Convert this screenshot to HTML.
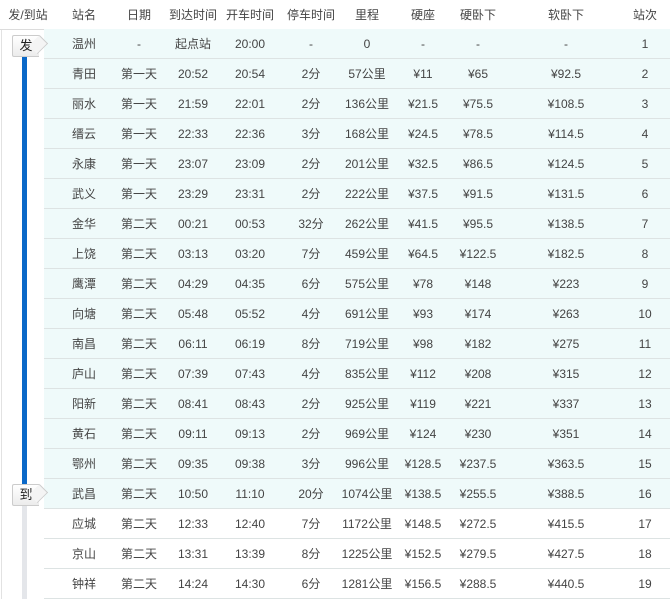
<!DOCTYPE html>
<html><head><meta charset="utf-8"><style>
body{margin:0;width:670px;height:599px;background:#fff;overflow:hidden;font-family:"Liberation Sans","Noto Sans CJK SC","WenQuanYi Zen Hei",sans-serif;font-size:12px;color:#444;position:relative}
.hdr{position:absolute;left:0;top:0;width:670px;height:29px;border-bottom:1px solid #dcdcdc}
.c{position:absolute;text-align:center;white-space:nowrap;line-height:16px;height:16px}
.row{position:absolute;left:44px;width:626px;height:29px;border-bottom:1px solid #dde3e3}
.cy{background:#effafa}
.vl{position:absolute;left:1px;top:30px;width:1px;height:569px;background:#e2e2e2}
.bar{position:absolute;left:22px;width:5px}
.tag{position:absolute;left:12px;width:26px;height:20px;background:linear-gradient(#fff,#ececec);border:1px solid #ccc;border-right:none;border-radius:2px 0 0 2px;font-size:13px;color:#222;line-height:20px;text-align:center}
.tag:after{content:"";position:absolute;right:-7px;top:1px;width:14px;height:14px;background:#f4f4f4;border-right:1px solid #ccc;border-top:1px solid #ccc;transform:rotate(45deg) scale(.8,1);transform-origin:center}
</style></head><body>
<div class="hdr"></div>
<div class="vl"></div>
<div id="t"></div>
<div class="bar" style="top:55px;height:432px;background:#0a68c8"></div>
<div class="bar" style="top:487px;height:112px;background:#e4e6ea"></div>
<div class="tag" style="top:35px">发</div>
<div class="tag" style="top:484px">到</div>
<script>
(function(){
var cx=[28,84,139,193,250,311,367,423,478,566,645];
var h=["发/到站","站名","日期","到达时间","开车时间","停车时间","里程","硬座","硬卧下","软卧下","站次"];
var d=[
["温州","-","起点站","20:00","-","0","-","-","-"],
["青田","第一天","20:52","20:54","2分","57公里","¥11","¥65","¥92.5"],
["丽水","第一天","21:59","22:01","2分","136公里","¥21.5","¥75.5","¥108.5"],
["缙云","第一天","22:33","22:36","3分","168公里","¥24.5","¥78.5","¥114.5"],
["永康","第一天","23:07","23:09","2分","201公里","¥32.5","¥86.5","¥124.5"],
["武义","第一天","23:29","23:31","2分","222公里","¥37.5","¥91.5","¥131.5"],
["金华","第二天","00:21","00:53","32分","262公里","¥41.5","¥95.5","¥138.5"],
["上饶","第二天","03:13","03:20","7分","459公里","¥64.5","¥122.5","¥182.5"],
["鹰潭","第二天","04:29","04:35","6分","575公里","¥78","¥148","¥223"],
["向塘","第二天","05:48","05:52","4分","691公里","¥93","¥174","¥263"],
["南昌","第二天","06:11","06:19","8分","719公里","¥98","¥182","¥275"],
["庐山","第二天","07:39","07:43","4分","835公里","¥112","¥208","¥315"],
["阳新","第二天","08:41","08:43","2分","925公里","¥119","¥221","¥337"],
["黄石","第二天","09:11","09:13","2分","969公里","¥124","¥230","¥351"],
["鄂州","第二天","09:35","09:38","3分","996公里","¥128.5","¥237.5","¥363.5"],
["武昌","第二天","10:50","11:10","20分","1074公里","¥138.5","¥255.5","¥388.5"],
["应城","第二天","12:33","12:40","7分","1172公里","¥148.5","¥272.5","¥415.5"],
["京山","第二天","13:31","13:39","8分","1225公里","¥152.5","¥279.5","¥427.5"],
["钟祥","第二天","14:24","14:30","6分","1281公里","¥156.5","¥288.5","¥440.5"]];
var s="";
for(var i=0;i<11;i++){var w=(i==0?56:80);s+='<div class="c" style="left:'+(cx[i]-w/2)+'px;width:'+w+'px;top:7px">'+h[i]+'</div>';}
for(var r=0;r<19;r++){var yy=29+30*r;
s+='<div class="row'+(r<16?' cy':'')+'" style="top:'+yy+'px"></div>';
var v=d[r].concat([String(r+1)]);
for(var j=0;j<10;j++)s+='<div class="c" style="left:'+(cx[j+1]-40)+'px;width:80px;top:'+(yy+7)+'px">'+v[j]+'</div>';}
document.getElementById("t").innerHTML=s;
})();
</script>
</body></html>
